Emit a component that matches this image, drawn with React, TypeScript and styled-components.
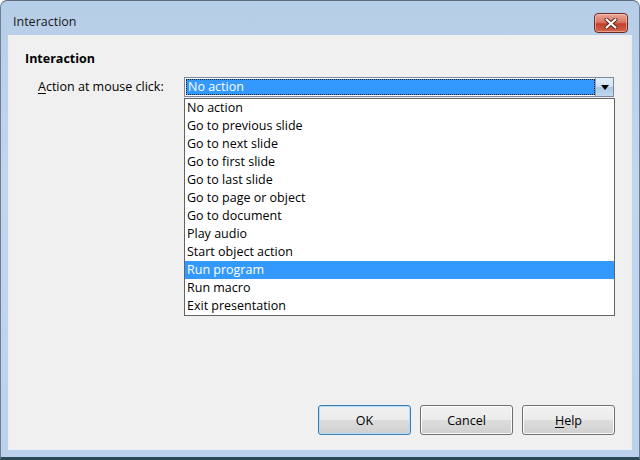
import React from "react";
import styled, { createGlobalStyle } from "styled-components";

const Global = createGlobalStyle`
  html, body { margin: 0; padding: 0; background: #ffffff; }
  body { font-family: "Open Sans", "Noto Sans", "Liberation Sans", sans-serif; font-size: 12.5px; }
  * { box-sizing: border-box; }
`;

const Window = styled.div`
  width: 640px;
  height: 460px;
  display: flex;
  flex-direction: column;
  background: linear-gradient(180deg, #b7cee8 0%, #c2d6ee 40%, #bcd2ec 100%);
  border: 1px solid #6d7f95;
  border-top-color: #5d6c7e;
  border-bottom: 3px solid #2c4a55;
  border-radius: 7px 7px 0 0;
  overflow: hidden;
`;

const TitleBar = styled.div`
  height: 34px;
  flex: none;
  display: flex;
  align-items: flex-start;
  justify-content: space-between;
  padding: 0 11px 0 12px;
`;

const TitleText = styled.span`
  margin-top: 12px;
  font-size: 12.5px;
  color: #1a1a1a;
`;

const CloseButton = styled.div`
  margin-top: 12px;
  width: 34px;
  height: 20px;
  border: 1px solid #6e2b22;
  border-radius: 4px;
  background: linear-gradient(180deg, #e9a799 0%, #d87a66 45%, #c3412c 55%, #d2644c 100%);
  display: flex;
  align-items: center;
  justify-content: center;
  box-shadow: inset 0 0 0 1px rgba(255, 220, 210, 0.5);
`;

const Client = styled.div`
  flex: 1;
  margin: 0 7px 7px 7px;
  background: #f0f0f0;
  border: 1px solid #e6eef7;
  border-top: none;
  display: flex;
  flex-direction: column;
  padding: 16px 16px 14px 16px;
`;

const SectionTitle = styled.div`
  font-weight: 700;
  line-height: 16px;
  color: #000;
`;

const FieldRow = styled.div`
  margin-top: 10px;
  padding-left: 13px;
  padding-right: 1px;
  display: flex;
  align-items: flex-start;
`;

const Label = styled.div`
  width: 146px;
  flex: none;
  color: #000;
  line-height: 20px;
  u { text-decoration: underline; text-underline-offset: 2px; }
`;

const ComboWrap = styled.div`
  flex: 1;
  position: relative;
`;

const Combo = styled.div`
  height: 20px;
  display: flex;
  border: 1px solid #7a8a9c;
  background: #fff;
`;

const ComboField = styled.div`
  flex: 1;
  margin: 1px 0 1px 1px;
  background: #3399ff;
  color: #fff;
  outline: 1px dotted #1a1a1a;
  outline-offset: -1px;
  display: flex;
  align-items: center;
  padding-left: 2px;
  line-height: 16px;
`;

const DropButton = styled.div`
  width: 18px;
  flex: none;
  border-left: 1px solid #8ba0b8;
  background: linear-gradient(180deg, #e5eef8 0%, #cfe0f2 50%, #aac6e4 51%, #c2d8ee 100%);
  display: flex;
  align-items: center;
  justify-content: center;
`;

const List = styled.div`
  position: absolute;
  left: 0;
  right: -1px;
  top: 21px;
  background: #fff;
  border: 1px solid #646464;
  display: flex;
  flex-direction: column;
  z-index: 2;
`;

const Item = styled.div<{ $selected?: boolean }>`
  height: 18px;
  line-height: 18px;
  padding-left: 2px;
  background: ${(p) => (p.$selected ? "#3399ff" : "transparent")};
  color: ${(p) => (p.$selected ? "#ffffff" : "#000000")};
  white-space: nowrap;
`;

const Spacer = styled.div`
  flex: 1;
`;

const Footer = styled.div`
  display: flex;
  justify-content: flex-end;
  gap: 9px;
`;

const Button = styled.div<{ $default?: boolean }>`
  width: 93px;
  height: 30px;
  border-radius: 3px;
  border: 1px solid ${(p) => (p.$default ? "#3c7fb1" : "#707070")};
  background: linear-gradient(180deg, #f2f2f2 0%, #ebebeb 48%, #dddddd 52%, #cfcfcf 100%);
  box-shadow: inset 0 0 0 1px ${(p) => (p.$default ? "#b4dcf5" : "#fbfbfb")};
  display: flex;
  align-items: center;
  justify-content: center;
  color: #000;
  u { text-decoration: underline; text-underline-offset: 2px; }
`;

const items = [
  "No action",
  "Go to previous slide",
  "Go to next slide",
  "Go to first slide",
  "Go to last slide",
  "Go to page or object",
  "Go to document",
  "Play audio",
  "Start object action",
  "Run program",
  "Run macro",
  "Exit presentation",
];

export default function App() {
  return (
    <>
      <Global />
      <Window>
        <TitleBar>
          <TitleText>Interaction</TitleText>
          <CloseButton>
            <svg width="14" height="11" viewBox="0 0 14 11">
              <path d="M2.5 1.5 L11.5 9.5 M11.5 1.5 L2.5 9.5" stroke="#5a2118" strokeWidth="4" strokeLinecap="round" />
              <path d="M2.5 1.5 L11.5 9.5 M11.5 1.5 L2.5 9.5" stroke="#ffffff" strokeWidth="2.2" strokeLinecap="round" />
            </svg>
          </CloseButton>
        </TitleBar>
        <Client>
          <SectionTitle>Interaction</SectionTitle>
          <FieldRow>
            <Label>
              <u>A</u>ction at mouse click:
            </Label>
            <ComboWrap>
              <Combo>
                <ComboField>No action</ComboField>
                <DropButton>
                  <svg width="8" height="5" viewBox="0 0 8 5">
                    <path d="M0 0 H8 L4 5 Z" fill="#000" />
                  </svg>
                </DropButton>
              </Combo>
              <List>
                {items.map((t) => (
                  <Item key={t} $selected={t === "Run program"}>
                    {t}
                  </Item>
                ))}
              </List>
            </ComboWrap>
          </FieldRow>
          <Spacer />
          <Footer>
            <Button $default>OK</Button>
            <Button>Cancel</Button>
            <Button>
              <u>H</u>elp
            </Button>
          </Footer>
        </Client>
      </Window>
    </>
  );
}
